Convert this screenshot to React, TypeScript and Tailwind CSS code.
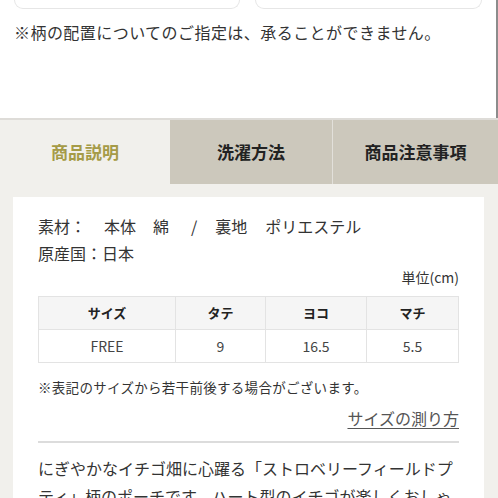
import React from "react";

export default function App() {
  const font = { fontFamily: '"Noto Sans CJK JP", "Noto Sans", sans-serif' };
  return (
    <div className="w-[498px] h-[498px] overflow-hidden bg-white text-[#333]" style={font}>
      {/* top area */}
      <div className="h-[118px] border-r-2 border-[#8c8c8c]">
        <div className="flex px-[14px] gap-[15px]">
          <div className="h-[9px] w-[226px] border border-t-0 border-[#e6e6e6] rounded-b-[10px]" />
          <div className="h-[9px] w-[227px] border border-t-0 border-[#e6e6e6] rounded-b-[10px]" />
        </div>
        <p className="mt-[11px] pl-[14px] text-[16px] leading-[24px] tracking-[0.45px] whitespace-nowrap">
          ※柄の配置についてのご指定は、承ることができません。
        </p>
      </div>

      {/* tabs section */}
      <div className="border-t-2 border-[#dedcd8] bg-[#f1f0ec]">
        <div className="flex h-[64px]">
          <div className="w-[170px] flex items-center justify-center text-[17px] font-bold text-[#a59b47]">
            商品説明
          </div>
          <div className="w-[162px] flex items-center justify-center text-[17px] font-bold text-[#222] bg-[#ccc8bc]">
            洗濯方法
          </div>
          <div className="w-[1px] bg-[#e2e0da]" />
          <div className="flex-1 flex items-center justify-center text-[17px] font-bold text-[#222] bg-[#ccc8bc]">
            商品注意事項
          </div>
        </div>

        <div className="pt-[13px] pl-[13px] pr-[14px]">
          <div className="bg-white px-[25px] pt-[16px] pb-[20px]">
            <p className="text-[16px] leading-[27px] whitespace-nowrap">
              素材：<span className="ml-[18px]">本体</span>
              <span className="ml-[17px]">綿</span>
              <span className="ml-[22px]">/</span>
              <span className="ml-[18px]">裏地</span>
              <span className="ml-[18px]">ポリエステル</span>
            </p>
            <p className="text-[16px] leading-[27px] whitespace-nowrap">原産国：日本</p>
            <p className="text-[14px] leading-[20px] text-right">単位(cm)</p>

            <div className="mt-[9px] border border-[#e3e3e3] text-[13px]">
              <div className="grid grid-cols-[137px_90px_101px_1fr] h-[33px] bg-[#f5f5f5] font-bold text-[#222] border-b border-[#e3e3e3]">
                <div className="flex items-center justify-center border-r border-[#e3e3e3]">サイズ</div>
                <div className="flex items-center justify-center border-r border-[#e3e3e3]">タテ</div>
                <div className="flex items-center justify-center border-r border-[#e3e3e3]">ヨコ</div>
                <div className="flex items-center justify-center">マチ</div>
              </div>
              <div className="grid grid-cols-[137px_90px_101px_1fr] h-[32px] bg-white text-[14px] text-[#444]">
                <div className="flex items-center justify-center border-r border-[#e3e3e3]">FREE</div>
                <div className="flex items-center justify-center border-r border-[#e3e3e3]">9</div>
                <div className="flex items-center justify-center border-r border-[#e3e3e3]">16.5</div>
                <div className="flex items-center justify-center">5.5</div>
              </div>
            </div>

            <p className="mt-[14px] text-[13.5px] leading-[20px] tracking-[0.3px] whitespace-nowrap">
              ※表記のサイズから若干前後する場合がございます。
            </p>
            <div className="mt-[9px] text-right">
              <a className="text-[16px] leading-[24px] text-[#555] underline underline-offset-[3px]">サイズの測り方</a>
            </div>
            <div className="mt-[11px] h-[2px] bg-[#dcdcdc]" />
            <p className="mt-[11px] text-[16px] leading-[28px] whitespace-nowrap">
              にぎやかなイチゴ畑に心躍る「ストロベリーフィールドプ
              <br />
              ティ」柄のポーチです。ハート型のイチゴが楽しくおしゃ
            </p>
          </div>
        </div>
      </div>
    </div>
  );
}
